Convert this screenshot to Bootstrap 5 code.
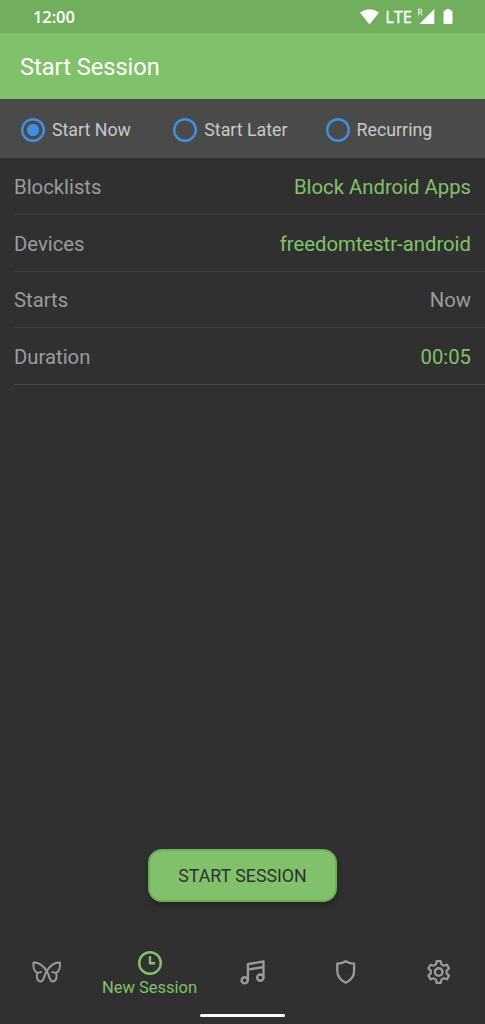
<!DOCTYPE html>
<html lang="en">
<head>
<meta charset="utf-8">
<meta name="viewport" content="width=device-width, initial-scale=1">
<title>Start Session</title>
<link href="https://cdn.jsdelivr.net/npm/bootstrap@5.3.0/dist/css/bootstrap.min.css" rel="stylesheet">
<style>
body{font-family:Roboto,"Liberation Sans",sans-serif;background:#303030;color:#9b9b9b;height:1024px;overflow:hidden}
svg{display:block;flex:none}
.status-bar{height:33px;background:#71af5e;color:#fff;padding:0 32px 0 33px}
.clock-text{font:600 16.5px/33px "Open Sans",Roboto,sans-serif;letter-spacing:-.1px}
.lte{font:500 16.5px/33px "Open Sans",sans-serif;margin:0 6px 0 6px;-webkit-text-stroke:.3px #fff}
.app-bar{height:66px;background:#82c16b;color:#fff;font-size:23.6px;line-height:68px;padding-left:20px}
.modes{height:59px;background:#4a4a4a;color:#c8c8c8;font-size:17.8px;padding:3px 0 0 21px}
.mode{width:152.3px;gap:7px}
.mode input{appearance:none;width:24px;height:24px;margin:0;border-radius:50%;box-shadow:inset 0 0 0 2.4px #4090e2}
.mode input:checked{background:radial-gradient(circle,#4090e2 5.7px,transparent 6.5px)}
.settings{margin-left:14px}
.setting{height:57px;border-bottom:1px solid #3b3b3b;padding:2px 14px 0 0;font-size:20.3px}
.setting:nth-child(3){height:56px}
.setting:last-child{border-color:#484848}
.green{color:#82c16b}
.start-btn{width:189px;height:53px;margin-bottom:31px;border:2px solid #6fac5b;border-radius:14px;background:#82c16b;color:#303030;font-size:17.8px;padding:1px 0 0;box-shadow:0 4px 6px rgba(0,0,0,.28)}
.start-btn:hover{background:#82c16b;color:#303030;border-color:#6fac5b}
.tabs{height:91px}
.tab{width:93px;height:77px;color:#9b9b9b}
.tab.current{width:113px;height:82px;color:#82c16b;font-size:16.5px;line-height:20px;gap:2px}
.tab svg{fill:none;stroke:currentColor;stroke-width:2.4;stroke-linejoin:round;stroke-linecap:round}
.home-pill{width:85px;height:3px;margin:-10px 0 7px;background:#fff}
</style>
</head>
<body class="d-flex flex-column">
<header>
<div class="status-bar d-flex align-items-center justify-content-between">
<span class="clock-text">12:00</span>
<div class="d-flex align-items-center">
<svg width="19" height="16" viewBox="0 0 19 16" fill="#fff"><path d="M0 3.5Q9.5-3.2 19 3.5L9.5 15.5Z"/></svg>
<span class="lte">LTE</span>
<svg width="17" height="17" viewBox="0 0 17 17"><path d="M16.3 1v15H1.5Z" fill="#fff"/><path d="M.7 7.5V1.2h1.7q1.5 0 1.5 1.5T2.4 4.2H.7M2.5 4.2 4.1 7.5" fill="none" stroke="#fff"/></svg>
<svg class="ms-2" width="10" height="17" viewBox="0 0 10 17" fill="#fff"><path d="M3 1h4v1.6h1.5q1 0 1 1V15q0 1-1 1h-7q-1 0-1-1V3.6q0-1 1-1H3Z"/></svg>
</div>
</div>
<h1 class="app-bar m-0 fw-normal">Start Session</h1>
</header>
<form class="modes d-flex align-items-center">
<label class="mode d-flex align-items-center"><input type="radio" name="mode" checked>Start Now</label>
<label class="mode d-flex align-items-center"><input type="radio" name="mode">Start Later</label>
<label class="mode d-flex align-items-center"><input type="radio" name="mode">Recurring</label>
</form>
<main class="settings">
<div class="setting d-flex align-items-center justify-content-between"><span>Blocklists</span><span class="green">Block Android Apps</span></div>
<div class="setting d-flex align-items-center justify-content-between"><span>Devices</span><span class="green">freedomtestr-android</span></div>
<div class="setting d-flex align-items-center justify-content-between"><span>Starts</span><span>Now</span></div>
<div class="setting d-flex align-items-center justify-content-between"><span>Duration</span><span class="green">00:05</span></div>
</main>
<button class="btn start-btn mt-auto mx-auto">START SESSION</button>
<nav class="tabs d-flex">
<a class="tab d-flex align-items-center justify-content-center" aria-label="Home"><svg width="30" height="24" viewBox="0.3 -0.3 30 24"><path d="M15 10.7C11.5 5.2 6.4 2 1.8 2.2 1.3 6.8 2.6 11.6 5.8 12.6 4.2 15.2 5.1 21 8.8 21.3 12.4 21.5 12.2 15.2 15 10.7ZM15 10.7C18.5 5.2 23.6 2 28.2 2.2 28.7 6.8 27.4 11.6 24.2 12.6 25.8 15.2 24.9 21 21.2 21.3 17.6 21.5 17.8 15.2 15 10.7ZM5.8 12.6 9.3 11.8M24.2 12.6 20.7 11.8" stroke-width="2"/></svg></a>
<a class="tab current d-flex flex-column align-items-center justify-content-center text-decoration-none"><svg width="26" height="26" viewBox="0 0 26 26"><circle cx="13" cy="13" r="10.8"/><path d="M13 7.4v5.8h4" stroke-linecap="square"/></svg><span>New Session</span></a>
<a class="tab d-flex align-items-center justify-content-center" aria-label="Sounds"><svg width="26" height="26" viewBox="0.3 -0.3 26 26"><circle cx="5" cy="21" r="3.1"/><circle cx="20.6" cy="18.3" r="3.1"/><path d="M8.2 21V4.8L23.8 2.2v16.1M8.2 10.3 23.8 7.7" stroke-width="2.3"/></svg></a>
<a class="tab d-flex align-items-center justify-content-center" aria-label="Shield"><svg width="22" height="26" viewBox="0.3 0 22 26"><path d="M11 2.2Q7 4.6 2.6 4.6V12Q2.6 19.8 11 23.8 19.4 19.8 19.4 12V4.6Q15 4.6 11 2.2Z" stroke-width="2.3"/></svg></a>
<a class="tab d-flex align-items-center justify-content-center" aria-label="Settings"><svg width="26" height="26" viewBox="0.3 0 26 26"><path d="M10.9 2.2h4.2l.7 3.2 2.3 1.3 3.1-1 2.1 3.7-2.4 2.2v2.8l2.4 2.2-2.1 3.7-3.1-1-2.3 1.3-.7 3.2h-4.2l-.7-3.2-2.3-1.3-3.1 1-2.1-3.7 2.4-2.2v-2.8L2.7 9.4l2.1-3.7 3.1 1 2.3-1.3Z" stroke-width="2.2"/><circle cx="13" cy="13" r="3.8"/></svg></a>
</nav>
<div class="home-pill align-self-center rounded-pill flex-shrink-0"></div>
<script src="https://cdn.jsdelivr.net/npm/bootstrap@5.3.0/dist/js/bootstrap.bundle.min.js"></script>
</body>
</html>
